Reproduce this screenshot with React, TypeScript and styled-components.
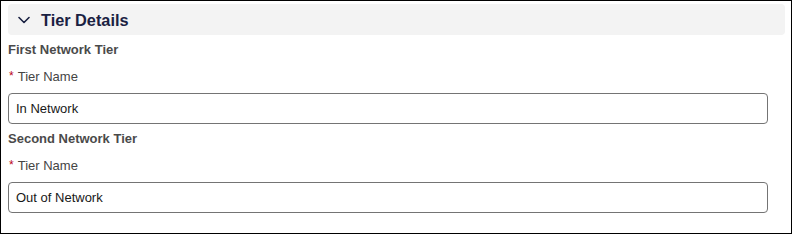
import React from "react";
import styled, { createGlobalStyle } from "styled-components";

const Global = createGlobalStyle`
  html, body { margin: 0; padding: 0; background: #fff; }
  body { font-family: "Liberation Sans", Arial, sans-serif; }
`;

const Frame = styled.div`
  box-sizing: border-box;
  width: 792px;
  height: 234px;
  border: 1px solid #000;
  padding: 3px 6px 0 7px;
  background: #fff;
`;

const SectionHeader = styled.div`
  display: flex;
  align-items: center;
  height: 31px;
  padding-left: 10px;
  gap: 11px;
  background: #f3f3f3;
  border-radius: 4px;
`;

const SectionTitle = styled.h2`
  margin: 0;
  font-size: 16.3px;
  font-weight: 700;
  color: #1a2142;
  line-height: 20px;
`;

const Body = styled.div`
  display: flex;
  flex-direction: column;
  padding: 6px 18px 0 0;
`;

const Group = styled.div<{ $first?: boolean }>`
  display: flex;
  flex-direction: column;
  margin-top: ${(p) => (p.$first ? 0 : 6)}px;
`;

const GroupTitle = styled.div`
  font-size: 13px;
  font-weight: 700;
  color: #4a4a4a;
  line-height: 18px;
`;

const Label = styled.label`
  display: flex;
  align-items: baseline;
  margin-top: 9px;
  font-size: 13px;
  color: #444;
  line-height: 18px;
`;

const Required = styled.abbr`
  color: #ba0517;
  text-decoration: none;
  font-size: 12px;
  margin: 0 4px 0 1px;
  position: relative;
  top: -1px;
`;

const Input = styled.input`
  box-sizing: border-box;
  width: 760px;
  height: 31px;
  margin-top: 7px;
  padding: 0 7px;
  border: 1px solid #747474;
  border-radius: 4px;
  font-family: "Liberation Sans", Arial, sans-serif;
  font-size: 13px;
  color: #181818;
  background: #fff;
  outline: none;
`;

const Chevron = () => (
  <svg width="12" height="8" viewBox="0 0 12 8">
    <polyline
      points="1,1.5 6,6.5 11,1.5"
      fill="none"
      stroke="#1a2142"
      strokeWidth="1.6"
      strokeLinecap="round"
      strokeLinejoin="round"
    />
  </svg>
);

const tiers = [
  { title: "First Network Tier", value: "In Network" },
  { title: "Second Network Tier", value: "Out of Network" },
];

export default function App() {
  return (
    <>
      <Global />
      <Frame>
        <SectionHeader>
          <Chevron />
          <SectionTitle>Tier Details</SectionTitle>
        </SectionHeader>
        <Body>
          {tiers.map((t, i) => (
            <Group key={t.title} $first={i === 0}>
              <GroupTitle>{t.title}</GroupTitle>
              <Label>
                <Required title="required">*</Required>
                Tier Name
              </Label>
              <Input defaultValue={t.value} readOnly />
            </Group>
          ))}
        </Body>
      </Frame>
    </>
  );
}
